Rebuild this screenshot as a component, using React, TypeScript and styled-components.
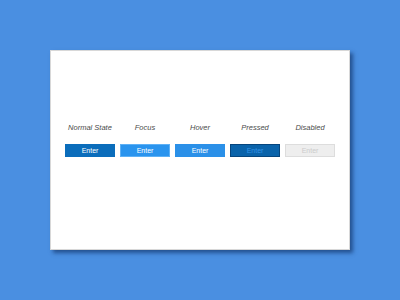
import React from 'react';
import styled, { createGlobalStyle, css } from 'styled-components';

const GlobalStyle = createGlobalStyle`
	html, body {
		margin: 0;
		padding: 0;
		background: #4a8fe1;
	}
	body {
		font-family: 'Liberation Sans', Arial, sans-serif;
	}
`;

type Variant = 'normal' | 'focus' | 'hover' | 'pressed' | 'disabled';

const states: { label: string; variant: Variant }[] = [
	{ label: 'Normal State', variant: 'normal' },
	{ label: 'Focus', variant: 'focus' },
	{ label: 'Hover', variant: 'hover' },
	{ label: 'Pressed', variant: 'pressed' },
	{ label: 'Disabled', variant: 'disabled' },
];

const variantStyles = {
	normal: css`
		background: #0b6dbb;
		border-color: #0b6dbb;
		color: #ffffff;
	`,
	focus: css`
		background: #2a94ee;
		border-color: #5db0f5;
		color: #ffffff;
	`,
	hover: css`
		background: #2b90e8;
		border-color: #2b90e8;
		color: #ffffff;
	`,
	pressed: css`
		background: #0a63aa;
		border-color: #06467e;
		color: #3593e6;
	`,
	disabled: css`
		background: #eeeeee;
		border-color: #dddddd;
		color: #cccccc;
	`,
};

const Page = styled.div`
	width: 400px;
	height: 300px;
	display: flex;
	align-items: center;
	justify-content: center;
`;

const Card = styled.div`
	width: 300px;
	height: 200px;
	box-sizing: border-box;
	background: #ffffff;
	border: 1px solid #d8d8d8;
	box-shadow: 3px 3px 4px rgba(10, 40, 90, 0.6);
	display: flex;
	justify-content: center;
	padding-top: 72px;
`;

const Row = styled.div`
	display: flex;
	gap: 5px;
`;

const Column = styled.div`
	width: 50px;
	display: flex;
	flex-direction: column;
	align-items: center;
	gap: 11px;
`;

const Label = styled.span`
	font-size: 7.5px;
	line-height: 10px;
	font-style: italic;
	color: #4a4a4a;
	white-space: nowrap;
`;

const Button = styled.button<{ $variant: Variant }>`
	width: 50px;
	height: 13px;
	box-sizing: border-box;
	padding: 0;
	border: 1px solid;
	font-family: 'Liberation Sans', Arial, sans-serif;
	font-size: 7px;
	line-height: 11px;
	${({ $variant }) => variantStyles[$variant]}
`;

export default function App() {
	return (
		<>
			<GlobalStyle />
			<Page>
				<Card>
					<Row>
						{states.map((s) => (
							<Column key={s.variant}>
								<Label>{s.label}</Label>
								<Button $variant={s.variant}>Enter</Button>
							</Column>
						))}
					</Row>
				</Card>
			</Page>
		</>
	);
}
